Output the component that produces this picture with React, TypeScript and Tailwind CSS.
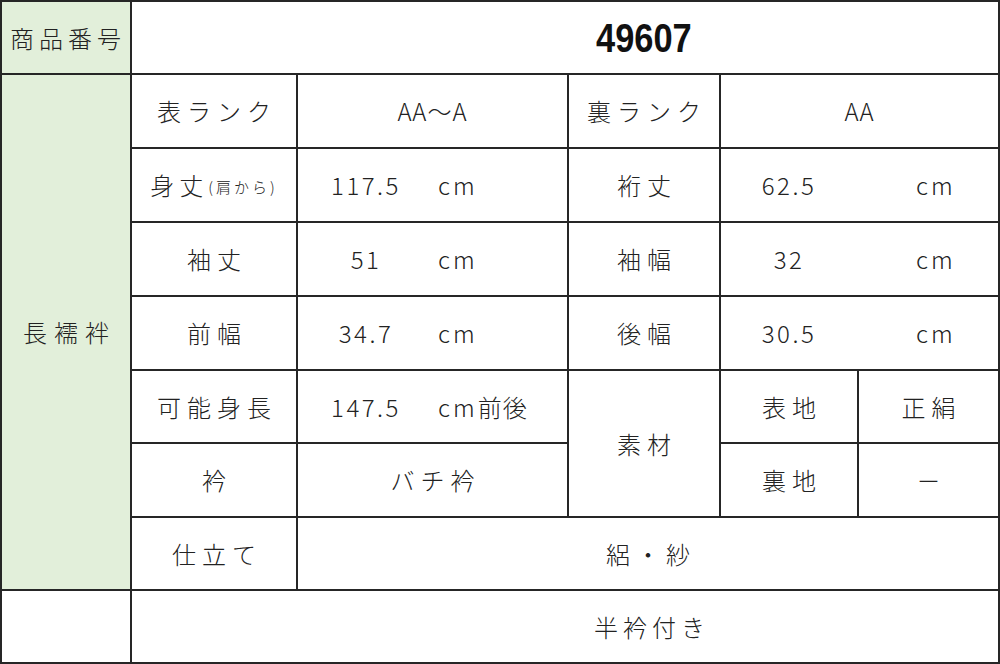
import React from "react";

const jp = "font-['Noto_Sans_CJK_JP',sans-serif] font-light";

function Label({ children, className = "" }: { children: React.ReactNode; className?: string }) {
  return (
    <div className={`bg-white flex items-center justify-center text-[24px] tracking-[6px] pl-[6px] text-[#222] ${jp} ${className}`}>
      {children}
    </div>
  );
}

function Plain({ children, className = "" }: { children: React.ReactNode; className?: string }) {
  return (
    <div className={`bg-white flex items-center justify-center text-[24px] tracking-[1px] text-[#222] ${jp} ${className}`}>
      {children}
    </div>
  );
}

function LeftValue({ num, unit, className = "" }: { num: string; unit: string; className?: string }) {
  return (
    <div className={`bg-white flex items-center text-[24px] text-[#222] ${jp} ${className}`}>
      <span className="w-[134px] text-center tracking-[2.5px] pl-[2px]">{num}</span>
      <span className="ml-[6px] tracking-[3px]">{unit}</span>
    </div>
  );
}

function RightValue({ num, className = "" }: { num: string; className?: string }) {
  return (
    <div className={`bg-white flex items-center text-[24px] text-[#222] ${jp} ${className}`}>
      <span className="w-[134px] text-center tracking-[2.5px] pl-[2px]">{num}</span>
      <span className="ml-[61px] tracking-[3px]">cm</span>
    </div>
  );
}

export default function App() {
  return (
    <div className="w-[1000px] h-[664px] bg-[#262626] p-[2px] grid gap-[2px] grid-cols-[128px_164px_269px_150px_136px_139px] grid-rows-[71px_72px_72px_72px_72px_71px_72px_71px_71px]">
      {/* row 1 */}
      <div className={`col-start-1 row-start-1 bg-[#e2efda] flex items-center justify-center text-[24px] tracking-[5px] pl-[4px] text-[#222] ${jp}`}>
        商品番号
      </div>
      <div className="col-start-2 col-span-5 row-start-1 bg-white flex items-center pl-[464px]">
        <span className="inline-block origin-left scale-x-[0.86] text-[40px] font-bold text-[#111] font-['Liberation_Sans',sans-serif]">
          49607
        </span>
      </div>

      {/* first column */}
      <div className={`col-start-1 row-start-2 row-span-7 bg-[#e2efda] flex items-center justify-center text-[24px] tracking-[7px] pl-[7px] text-[#222] ${jp}`}>
        長襦袢
      </div>
      <div className="col-start-1 row-start-9 bg-white" />

      {/* row 2 */}
      <Label className="col-start-2 row-start-2">表ランク</Label>
      <Plain className="col-start-3 row-start-2">AA～A</Plain>
      <Label className="col-start-4 row-start-2">裏ランク</Label>
      <Plain className="col-start-5 col-span-2 row-start-2">AA</Plain>

      {/* row 3 */}
      <div className={`col-start-2 row-start-3 bg-white flex items-center justify-center text-[#222] ${jp}`}>
        <span className="text-[24px] tracking-[5px]">身丈</span>
        <span className="text-[15px] tracking-[3px] mt-[4px]">(肩から)</span>
      </div>
      <LeftValue className="col-start-3 row-start-3" num="117.5" unit="cm" />
      <Label className="col-start-4 row-start-3">裄丈</Label>
      <RightValue className="col-start-5 col-span-2 row-start-3" num="62.5" />

      {/* row 4 */}
      <Label className="col-start-2 row-start-4">袖丈</Label>
      <LeftValue className="col-start-3 row-start-4" num="51" unit="cm" />
      <Label className="col-start-4 row-start-4">袖幅</Label>
      <RightValue className="col-start-5 col-span-2 row-start-4" num="32" />

      {/* row 5 */}
      <Label className="col-start-2 row-start-5">前幅</Label>
      <LeftValue className="col-start-3 row-start-5" num="34.7" unit="cm" />
      <Label className="col-start-4 row-start-5">後幅</Label>
      <RightValue className="col-start-5 col-span-2 row-start-5" num="30.5" />

      {/* row 6 */}
      <Label className="col-start-2 row-start-6 tracking-[4px] pl-[4px]">可能身長</Label>
      <div className={`col-start-3 row-start-6 bg-white flex items-center text-[24px] text-[#222] ${jp}`}>
        <span className="w-[134px] text-center tracking-[2.5px] pl-[2px]">147.5</span>
        <span className="ml-[6px] tracking-[3px]">cm</span>
        <span className="tracking-[1px]">前後</span>
      </div>
      <Label className="col-start-4 row-start-6 row-span-2">素材</Label>
      <Label className="col-start-5 row-start-6">表地</Label>
      <Label className="col-start-6 row-start-6">正絹</Label>

      {/* row 7 */}
      <Label className="col-start-2 row-start-7">衿</Label>
      <Label className="col-start-3 row-start-7">バチ衿</Label>
      <Label className="col-start-5 row-start-7">裏地</Label>
      <Label className="col-start-6 row-start-7">－</Label>

      {/* row 8 */}
      <Label className="col-start-2 row-start-8">仕立て</Label>
      <Label className="col-start-3 col-span-4 row-start-8">絽・紗</Label>

      {/* row 9 */}
      <div className="col-start-2 col-span-5 row-start-9 bg-white flex items-center pl-[462px]">
        <span className={`text-[24px] tracking-[5px] text-[#222] ${jp}`}>半衿付き</span>
      </div>
    </div>
  );
}
